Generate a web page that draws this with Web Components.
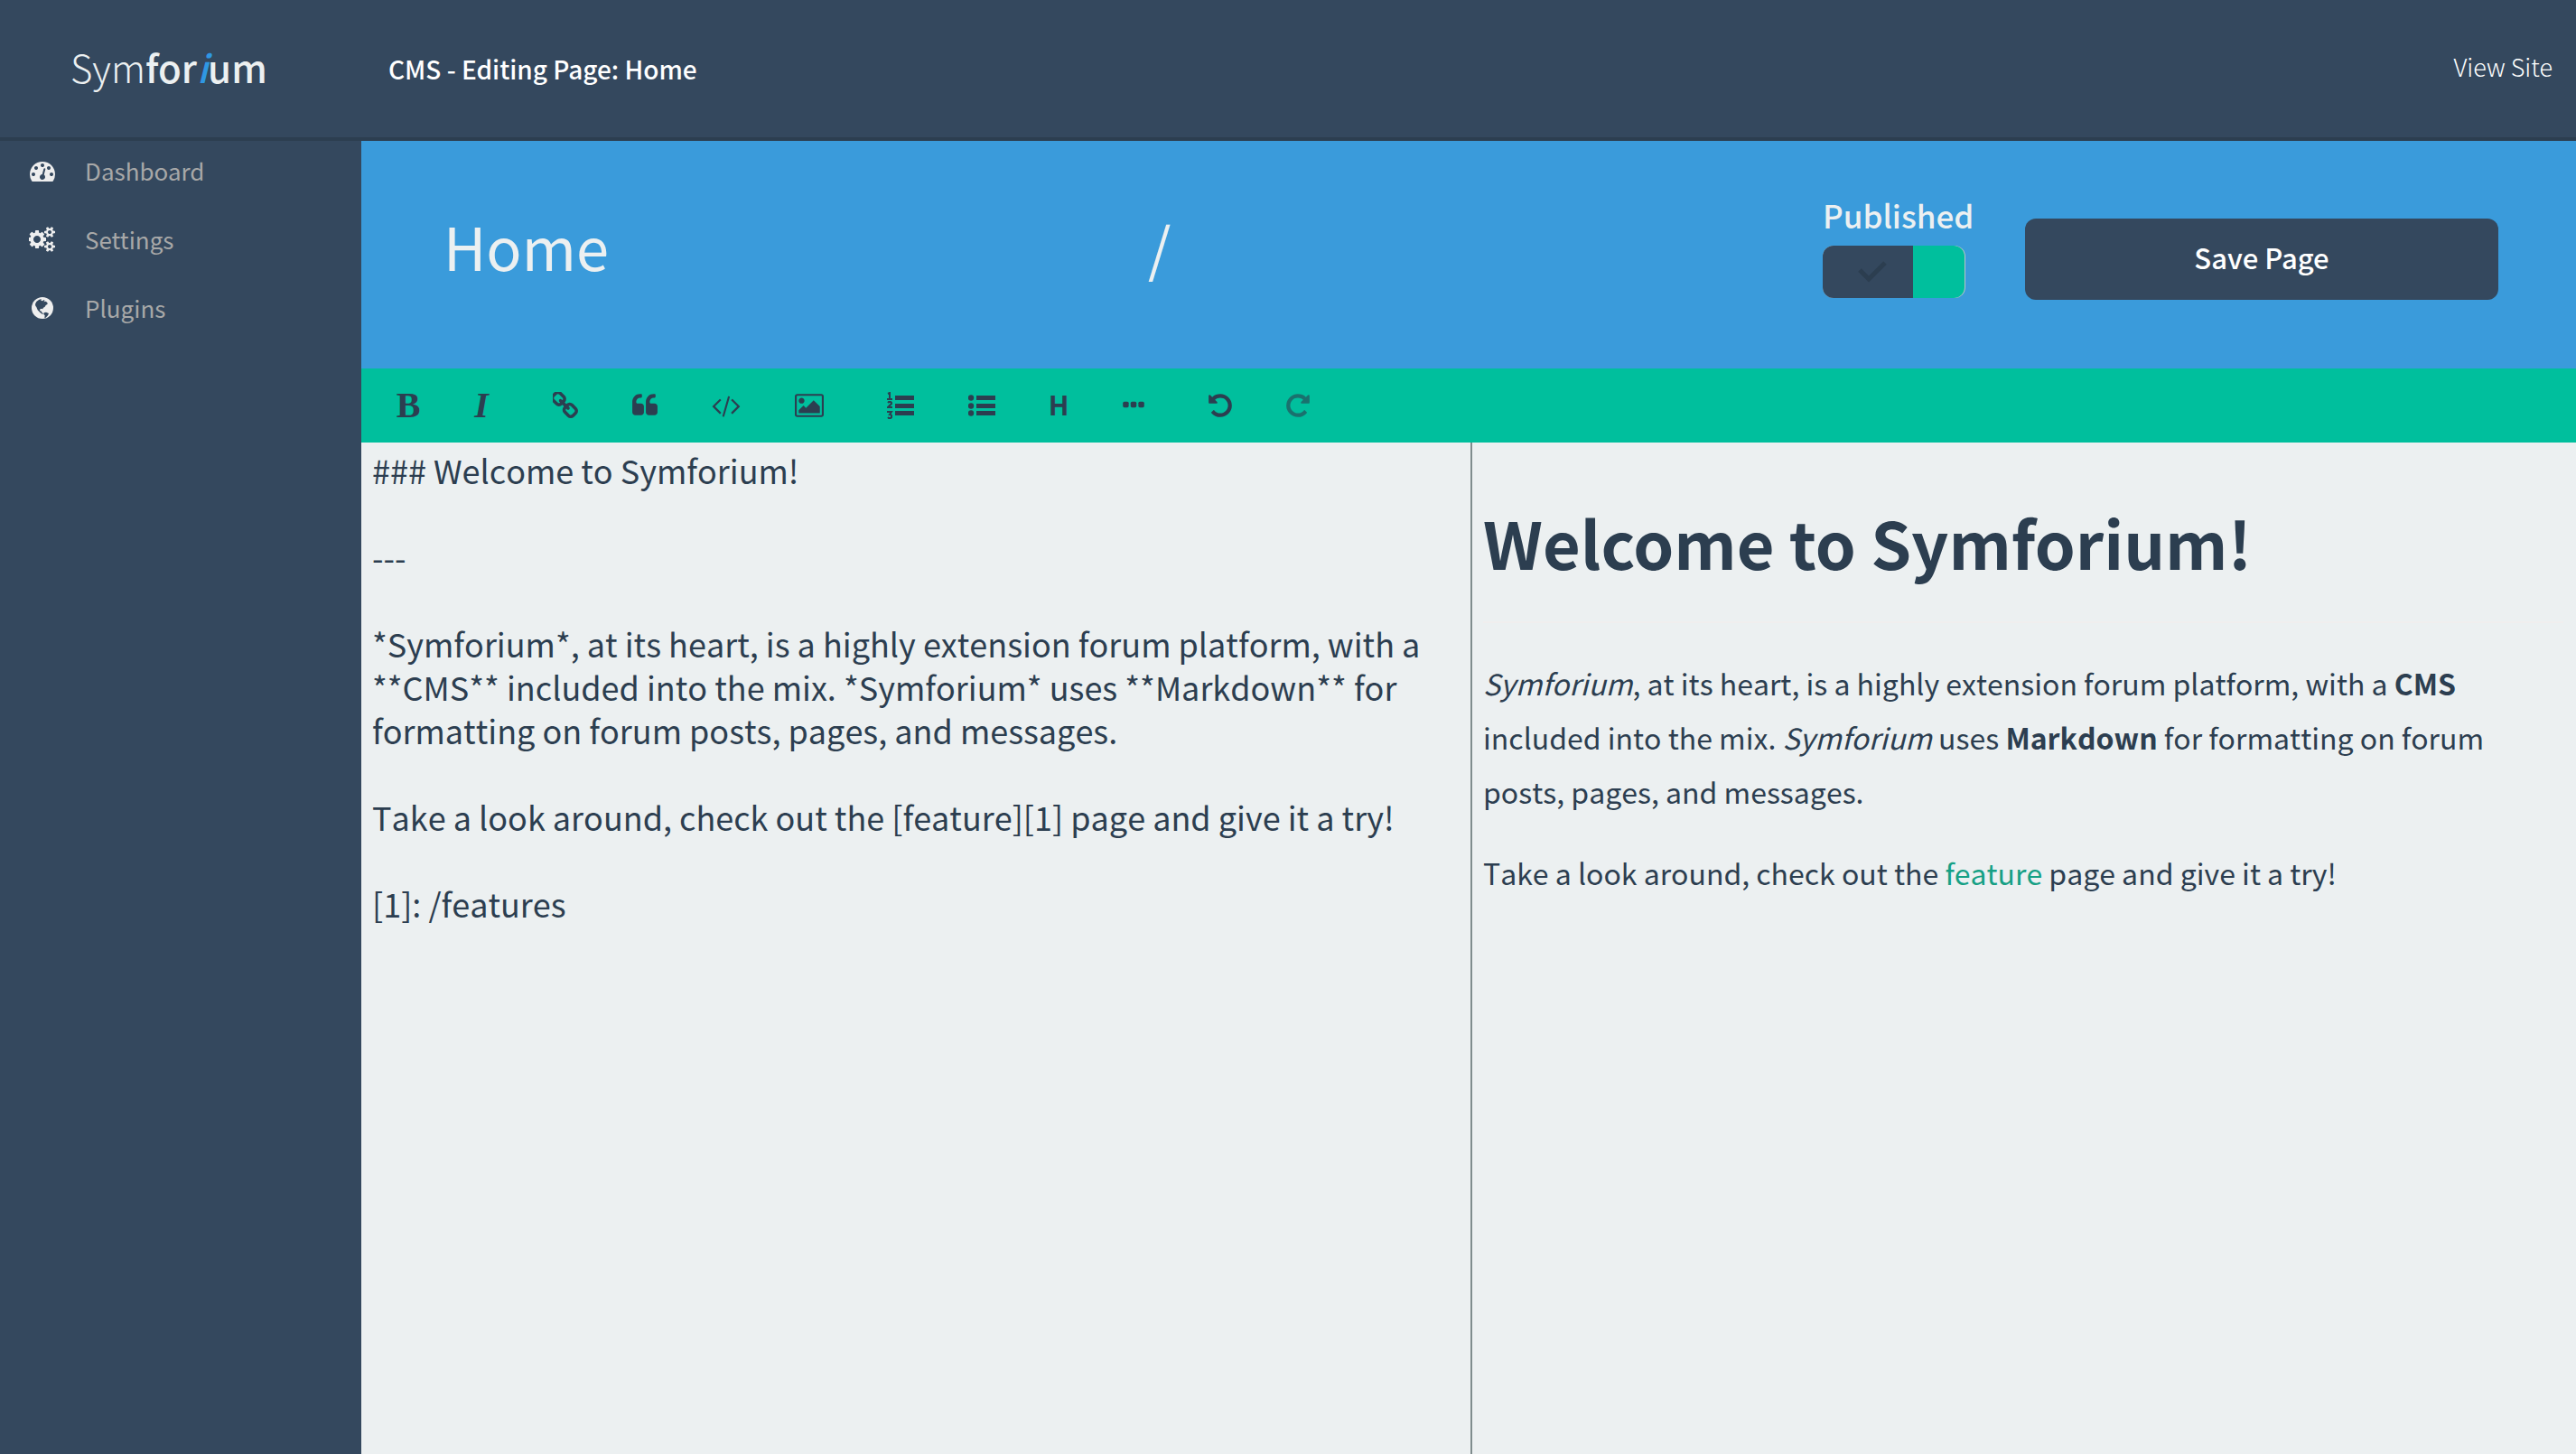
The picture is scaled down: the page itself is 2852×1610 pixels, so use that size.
<!DOCTYPE html>
<html lang="en">
<head>
<meta charset="utf-8">
<title>Symforium CMS - Editing Page: Home</title>
<style>
html, body { height: 100%; margin: 0; }
body {
  --navy: #34485e; --ink: #2c3e50; --blue: #3a9bdb; --green: #00bf9d; --paper: #ecf0f1;
  font-family: "Noto Sans CJK SC", "Noto Sans", sans-serif;
  color: var(--ink); background: var(--paper);
}
</style>
</head>
<body>
<cms-app>
  <cms-header slot="header">CMS - Editing Page: Home</cms-header>
  <cms-sidebar slot="sidebar"></cms-sidebar>
  <page-settings slot="main"></page-settings>
  <editor-toolbar slot="main"></editor-toolbar>
  <markdown-editor slot="main"></markdown-editor>
</cms-app>

<script>
const define = (name, html) => {
  const template = document.createElement('template');
  template.innerHTML = '<style>*{box-sizing:border-box}</style>' + html;
  customElements.define(name, class extends HTMLElement {
    constructor() {
      super();
      this.attachShadow({ mode: 'open' }).append(template.content.cloneNode(true));
    }
  });
};

define('cms-app', `
<style>
:host { display: flex; flex-direction: column; min-height: 100vh; }
.body { flex: 1; display: flex; }
main { flex: 1; min-width: 0; display: flex; flex-direction: column; }
</style>
<slot name="header"></slot>
<div class="body"><slot name="sidebar"></slot><main><slot name="main"></slot></main></div>`);

define('cms-header', `
<style>
:host { display: flex; align-items: center; height: 156px; background: var(--navy);
  border-bottom: 4px solid var(--ink); padding-right: 26px; box-sizing: border-box; }
.brand { width: 400px; padding: 0 0 4px 78px; font-size: 42px; line-height: 60px; font-weight: 300;
  color: var(--paper); text-decoration: none; }
.brand b { font-weight: 500; }
.brand i { color: #2f97e3; }
h1 { flex: 1; margin: 0; padding-left: 30px; font-size: 28px; line-height: 40px; font-weight: 500; color: #fff; }
.view { padding-bottom: 4px; font-size: 27px; line-height: 40px; font-weight: 300; color: #fff; text-decoration: none; }
</style>
<a class="brand" href="#">Sym<b>for<i>i</i>um</b></a>
<h1><slot></slot></h1>
<a class="view" href="#">View Site</a>`);

define('cms-sidebar', `
<style>
:host { display: block; width: 400px; background: var(--navy); }
nav { display: flex; flex-direction: column; gap: 10px; }
a { display: flex; align-items: center; gap: 32px; height: 66px; padding-left: 32px;
  font-size: 26px; line-height: 40px; color: #a8a8a8; text-decoration: none; }
svg { width: 30px; height: 28px; fill: #eee; }
</style>
<nav>
<a href="#"><svg viewBox="-64 0 1920 1792"><path d="M384 1152q0-53-37.5-90.5t-90.5-37.5-90.5 37.5-37.5 90.5 37.5 90.5 90.5 37.5 90.5-37.5 37.5-90.5zm192-448q0-53-37.5-90.5t-90.5-37.5-90.5 37.5-37.5 90.5 37.5 90.5 90.5 37.5 90.5-37.5 37.5-90.5zm428 481l101-382q6-26-7.5-48.5t-38.5-29.5-48 6.5-30 39.5l-101 382q-60 5-107 43.5t-63 98.5q-20 77 20 146t117 89 146-20 89-117q16-60-6-117t-72-91zm660-33q0-53-37.5-90.5t-90.5-37.5-90.5 37.5-37.5 90.5 37.5 90.5 90.5 37.5 90.5-37.5 37.5-90.5zm-640-640q0-53-37.5-90.5t-90.5-37.5-90.5 37.5-37.5 90.5 37.5 90.5 90.5 37.5 90.5-37.5 37.5-90.5zm448 192q0-53-37.5-90.5t-90.5-37.5-90.5 37.5-37.5 90.5 37.5 90.5 90.5 37.5 90.5-37.5 37.5-90.5zm320 448q0 261-141 483-19 29-54 29h-1402q-35 0-54-29-141-221-141-483 0-182 71-348t191-286 286-191 348-71 348 71 286 191 191 286 71 348z"/></svg>Dashboard</a>
<a href="#"><svg viewBox="0 0 1920 1792"><path d="M832 896q0-106-75-181t-181-75-181 75-75 181 75 181 181 75 181-75 75-181zm768 512q0-52-38-90t-90-38-90 38-38 90q0 53 37.5 90.5t90.5 37.5 90.5-37.5 37.5-90.5zm0-1024q0-52-38-90t-90-38-90 38-38 90q0 53 37.5 90.5t90.5 37.5 90.5-37.5 37.5-90.5zm-384 421v185q0 10-7 19.5t-16 10.5l-155 24q-11 35-32 76 34 48 90 115 7 11 7 20 0 12-7 19-23 30-82.5 89.5t-78.5 59.5q-11 0-21-7l-115-90q-37 19-77 31-11 108-23 155-7 24-30 24h-186q-11 0-20-7.5t-10-17.5l-23-153q-34-10-75-31l-118 89q-7 7-20 7-11 0-21-8-144-133-144-160 0-9 7-19 10-14 41-53t47-61q-23-44-35-82l-152-24q-10-1-17-9.5t-7-19.5v-185q0-10 7-19.5t16-10.5l155-24q11-35 32-76-34-48-90-115-7-11-7-20 0-12 7-20 22-30 82-89t79-59q11 0 21 7l115 90q34-18 77-32 11-108 23-154 7-24 30-24h186q11 0 20 7.5t10 17.5l23 153q34 10 75 31l118-89q8-7 20-7 11 0 21 8 144 133 144 160 0 8-7 19-12 16-42 54t-45 60q23 48 34 82l152 23q10 2 17 10.5t7 19.5zm640 533v140q0 16-149 31-12 27-30 52 51 113 51 138 0 4-4 7-122 71-124 71-8 0-46-47t-52-68q-20 2-30 2t-30-2q-14 21-52 68t-46 47q-2 0-124-71-4-3-4-7 0-25 51-138-18-25-30-52-149-15-149-31v-140q0-16 149-31 13-29 30-52-51-113-51-138 0-4 4-7 4-2 35-20t59-34 30-16q8 0 46 46.5t52 67.5q20-2 30-2t30 2q51-71 92-112l6-2q4 0 124 70 4 3 4 7 0 25-51 138 17 23 30 52 149 15 149 31zm0-1024v140q0 16-149 31-12 27-30 52 51 113 51 138 0 4-4 7-122 71-124 71-8 0-46-47t-52-68q-20 2-30 2t-30-2q-14 21-52 68t-46 47q-2 0-124-71-4-3-4-7 0-25 51-138-18-25-30-52-149-15-149-31v-140q0-16 149-31 13-29 30-52-51-113-51-138 0-4 4-7 4-2 35-20t59-34 30-16q8 0 46 46.5t52 67.5q20-2 30-2t30 2q51-71 92-112l6-2q4 0 124 70 4 3 4 7 0 25-51 138 17 23 30 52 149 15 149 31z"/></svg>Settings</a>
<a href="#"><svg viewBox="24 24 90 84"><circle cx="69" cy="66" r="36"/><path fill="#34485e" d="M45 53l4-8 8-6 8-3-1 5 5 2 5-4 3 3-4 4 7-2 5 4 1 5-6 4-3 5-6 4-1 4-5-2-5 3 1 5 5 1 1 4 5 4-3 2-8-6-8-8-4-10-3-4zM74 82l7-2 9 4-3 7-7 7-4 2 1-9-4-4z"/></svg>Plugins</a>
</nav>`);

define('toggle-switch', `
<style>
:host { display: block; color: var(--paper); }
label { display: flex; flex-direction: column; gap: 10px; padding-bottom: 2px; font-size: 35px; line-height: 48px; font-weight: 500; }
.track { position: relative; display: flex; width: 158px; height: 58px; border-radius: 12px; overflow: hidden; background: #bdc3c7; }
.on { width: 100px; background: var(--navy); }
.knob { flex: 1; margin-right: 1px; background: var(--green); border-radius: 0 12px 12px 0; }
svg { display: block; width: 100px; height: 58px; fill: none; stroke: var(--ink); stroke-width: 5; }
input { position: absolute; inset: 0; width: 100%; height: 100%; margin: 0; opacity: 0; }
</style>
<label><slot></slot>
<span class="track"><span class="on"><svg viewBox="0 0 100 58"><path d="M41 27l10 10L69 19"/></svg></span><span class="knob"></span><input type="checkbox" role="switch" checked></span>
</label>`);

define('page-settings', `
<style>
:host { display: grid; grid-template-columns: 195fr 188fr 56fr 131fr; align-items: end;
  padding: 56px 86px 76px; background: var(--blue); }
input { width: 100%; height: 120px; border: 0; padding: 0 5px; background: none; outline: 0;
  font: 400 65px/96px "Noto Sans CJK SC", "Noto Sans", sans-serif; color: var(--paper); }
button { height: 90px; border: 0; border-radius: 12px; padding: 0 0 4px; background: var(--navy); color: #fff;
  font: 500 31px/48px "Noto Sans CJK SC", "Noto Sans", sans-serif; }
</style>
<input aria-label="Page title" value="Home">
<input aria-label="Page path" value="/">
<toggle-switch>Published</toggle-switch>
<button type="button">Save Page</button>`);

define('editor-toolbar', `
<style>
:host { display: flex; align-items: center; gap: 70px; height: 82px; padding-left: 40px; background: var(--green); box-sizing: border-box; }
.group { display: flex; align-items: center; gap: 60px; }
button { display: flex; justify-content: center; align-items: center; border: 0; padding: 0; margin: 0; background: none; color: var(--ink); height: 48px; }
button:disabled { opacity: .6; }
svg { display: block; height: 30px; fill: currentColor; }
.serif { font: 700 40px/48px "Liberation Serif", serif; }
.italic { font-style: italic; }
.head { padding-bottom: 4px; font: 700 30px/44px "Noto Sans CJK SC", sans-serif; }
.w18 { width: 18px; } .w20 { width: 20px; } .w24 { width: 24px; } .w26 { width: 26px; } .w28 { width: 28px; } .w30 { width: 30px; } .w32 { width: 32px; }
</style>
<div class="group">
<button type="button" class="serif w24" aria-label="Bold">B</button>
<button type="button" class="serif italic w18" aria-label="Italic">I</button>
</div>
<div class="group">
<button type="button" aria-label="Link"><svg class="w28" viewBox="144 144 1504 1504"><path d="M1456 1216q0-40-28-68l-208-208q-28-28-68-28-42 0-72 32 3 3 19 18.5t21.5 21.5 15 19 13 25.5 3.5 27.5q0 40-28 68t-68 28q-15 0-27.5-3.5t-25.5-13-19-15-21.5-21.5-18.5-19q-33 31-33 73 0 40 28 68l206 207q27 27 68 27 40 0 68-26l147-146q28-28 28-67zm-703-705q0-40-28-68l-206-207q-28-28-68-28-39 0-68 27l-147 146q-28 28-28 67 0 40 28 68l208 208q27 27 68 27 42 0 72-31-3-3-19-18.5t-21.5-21.5-15-19-13-25.5-3.5-27.5q0-40 28-68t68-28q15 0 27.5 3.5t25.5 13 19 15 21.5 21.5 18.5 19q33-31 33-73zm895 705q0 120-85 203l-147 146q-83 83-203 83-121 0-204-85l-206-207q-83-83-83-203 0-123 88-209l-88-88q-86 88-208 88-120 0-204-84l-208-208q-84-84-84-204t85-203l147-146q83-83 203-83 121 0 204 85l206 207q83 83 83 203 0 123-88 209l88 88q86-88 208-88 120 0 204 84l208 208q84 84 84 204z"/></svg></button>
<button type="button" aria-label="Quote"><svg class="w28" viewBox="64 0 1664 1792"><path d="M832 960v384q0 80-56 136t-136 56h-384q-80 0-136-56t-56-136v-704q0-104 40.5-198.5t109.5-163.5 163.5-109.5 198.5-40.5h64q26 0 45 19t19 45v128q0 26-19 45t-45 19h-64q-106 0-181 75t-75 181v32q0 40 28 68t68 28h224q80 0 136 56t56 136zm896 0v384q0 80-56 136t-136 56h-384q-80 0-136-56t-56-136v-704q0-104 40.5-198.5t109.5-163.5 163.5-109.5 198.5-40.5h64q26 0 45 19t19 45v128q0 26-19 45t-45 19h-64q-106 0-181 75t-75 181v32q0 40 28 68t68 28h224q80 0 136 56t56 136z"/></svg></button>
<button type="button" aria-label="Code"><svg class="w32" viewBox="-60 0 1920 1792"><path d="M553 1399l-50 50q-10 10-23 10t-23-10l-466-466q-10-10-10-23t10-23l466-466q10-10 23-10t23 10l50 50q10 10 10 23t-10 23l-393 393 393 393q10 10 10 23t-10 23zm591-1067l-373 1291q-4 13-15.5 19.5t-23.5 2.5l-62-17q-13-4-19.5-15.5t-2.5-24.5l373-1291q4-13 15.5-19.5t23.5-2.5l62 17q13 4 19.5 15.5t2.5 24.5zm657 651l-466 466q-10 10-23 10t-23-10l-50-50q-10-10-10-23t10-23l393-393-393-393q-10-10-10-23t10-23l50-50q10-10 23-10t23 10l466 466q10 10 10 23t-10 23z"/></svg></button>
<button type="button" aria-label="Image"><svg class="w32" viewBox="-64 0 1920 1792"><path d="M576 576q0 80-56 136t-136 56-136-56-56-136 56-136 136-56 136 56 56 136zm1024 384v448h-1408v-192l320-320 160 160 512-512zm96-704h-1600q-13 0-22.5 9.5t-9.5 22.5v1216q0 13 9.5 22.5t22.5 9.5h1600q13 0 22.5-9.5t9.5-22.5v-1216q0-13-9.5-22.5t-22.5-9.5zm160 32v1216q0 66-47 113t-113 47h-1600q-66 0-113-47t-47-113v-1216q0-66 47-113t113-47h1600q66 0 113 47t47 113z"/></svg></button>
</div>
<div class="group">
<button type="button" aria-label="Numbered list"><svg class="w30" viewBox="0 0 30 30"><path d="M9 4h21v5H9zM9 13h21v5H9zM9 21h21v5H9z"/><path fill="none" stroke="currentColor" stroke-width="2" d="M1 2l2-1v7M0 8h6M1 12l1-1h2l1 1v1l-4 4h5M0 22h5l-2 3h1l1 1v2l-1 1H2l-1-1"/></svg></button>
<button type="button" aria-label="Bulleted list"><svg class="w30" viewBox="0 0 30 30"><circle cx="3" cy="6.500" r="3.200"/><circle cx="3" cy="15.500" r="3.200"/><circle cx="3" cy="23.500" r="3.200"/><path d="M9 4h21v5H9zM9 13h21v5H9zM9 21h21v5H9z"/></svg></button>
<button type="button" class="head w20" aria-label="Heading">H</button>
<button type="button" aria-label="Horizontal rule"><svg class="w26" viewBox="136 0 1520 1792"><rect x="192" y="640" width="384" height="384" rx="96"/><rect x="704" y="640" width="384" height="384" rx="96"/><rect x="1216" y="640" width="384" height="384" rx="96"/></svg></button>
</div>
<div class="group">
<button type="button" aria-label="Undo"><svg class="w26" viewBox="128 0 1536 1792"><path d="M1664 896q0 156-61 298t-164 245-245 164-298 61q-172 0-327-72.5t-264-204.5q-7-10-6.5-22.5t8.5-20.5l137-138q10-9 25-9 16 2 23 12 73 95 179 147t225 52q104 0 198.5-40.5t163.5-109.5 109.5-163.5 40.5-198.5-40.5-198.5-109.5-163.5-163.5-109.5-198.5-40.5q-98 0-188 35.5t-160 101.5l137 138q31 30 14 69-17 40-59 40h-448q-26 0-45-19t-19-45v-448q0-42 40-59 39-17 69 14l130 129q107-101 244.5-156.5t284.5-55.5q156 0 298 61t245 164 164 245 61 298z"/></svg></button>
<button type="button" aria-label="Redo" disabled><svg class="w26" viewBox="128 0 1536 1792"><path transform="matrix(-1 0 0 1 1792 0)" d="M1664 896q0 156-61 298t-164 245-245 164-298 61q-172 0-327-72.5t-264-204.5q-7-10-6.5-22.5t8.5-20.5l137-138q10-9 25-9 16 2 23 12 73 95 179 147t225 52q104 0 198.5-40.5t163.5-109.5 109.5-163.5 40.5-198.5-40.5-198.5-109.5-163.5-163.5-109.5-198.5-40.5q-98 0-188 35.5t-160 101.5l137 138q31 30 14 69-17 40-59 40h-448q-26 0-45-19t-19-45v-448q0-42 40-59 39-17 69 14l130 129q107-101 244.5-156.5t284.5-55.5q156 0 298 61t245 164 164 245 61 298z"/></svg></button>
</div>`);

define('markdown-editor', `
<style>
:host { flex: 1; display: flex; font-kerning: none; }
textarea { flex: none; width: calc(50% + 2px); border: 0; padding: 6px 12px; margin: 0; resize: none; outline: 0; background: none;
  font: 400 36px/48px "Noto Sans CJK SC", "Noto Sans", sans-serif; font-kerning: none; color: var(--ink); }
article { flex: 1; min-width: 0; padding: 0 14px 0 12px; border-left: 2px solid #7f8c8d; font-size: 32px; line-height: 60px; }
h3 { margin: 62px 0 40px; font-size: 72px; line-height: 96px; font-weight: 700; font-kerning: normal; }
hr { margin: 0 0 36px; border: 0; border-top: 2px solid #f0eeee; }
p { margin: 0 0 30px; }
a { color: #16a085; text-decoration: none; }
</style>
<textarea aria-label="Markdown source">### Welcome to Symforium!

---

*Symforium*, at its heart, is a highly extension forum platform, with a **CMS** included into the mix. *Symforium* uses **Markdown** for formatting on forum posts, pages, and messages.

Take a look around, check out the [feature][1] page and give it a try!

[1]: /features</textarea>
<article>
<h3>Welcome to Symforium!</h3>
<hr>
<p><em>Symforium</em>, at its heart, is a highly extension forum platform, with a <strong>CMS</strong> included into the mix. <em>Symforium</em> uses <strong>Markdown</strong> for formatting on forum posts, pages, and messages.</p>
<p>Take a look around, check out the <a href="#">feature</a> page and give it a try!</p>
</article>`);
</script>
</body>
</html>
